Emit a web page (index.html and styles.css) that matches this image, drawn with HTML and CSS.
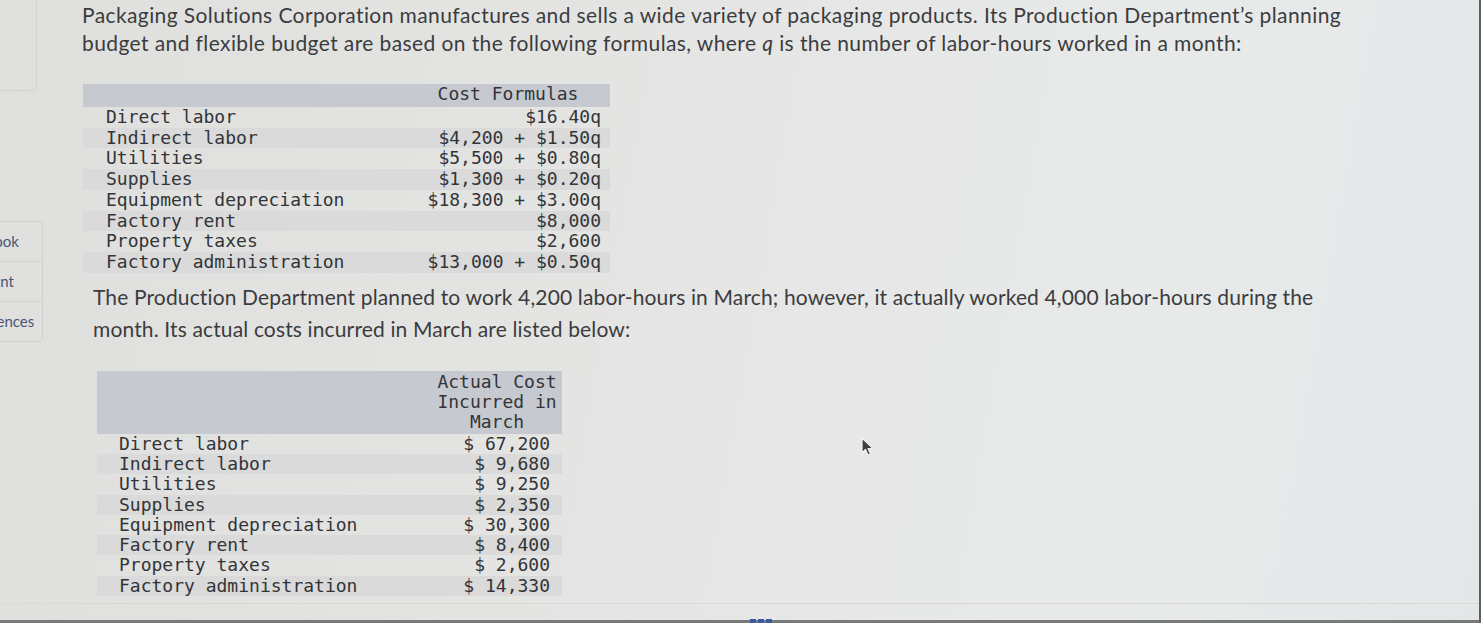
FILE: index.html
```html
<!DOCTYPE html>
<html>
<head>
<meta charset="utf-8">
<link rel="stylesheet" href="styles.css">
</head>
<body>
<div class="screen">
  <aside class="sidebar">
    <div class="side-top"></div>
    <nav class="side-nav">
      <div class="side-item">eBook</div>
      <div class="side-item">Print</div>
      <div class="side-item">References</div>
    </nav>
  </aside>
  <main class="main">
    <p class="prose prose-first">Packaging Solutions Corporation manufactures and sells a wide variety of packaging products. Its Production Department’s planning budget and flexible budget are based on the following formulas, where <i>q</i> is the number of labor-hours worked in a month:</p>
    <table class="cost-table formulas">
      <thead>
        <tr><th class="lab"></th><th class="val">Cost Formulas</th></tr>
      </thead>
      <tbody>
        <tr><td class="lab">Direct labor</td><td class="val">$16.40q</td></tr>
        <tr><td class="lab">Indirect labor</td><td class="val">$4,200 + $1.50q</td></tr>
        <tr><td class="lab">Utilities</td><td class="val">$5,500 + $0.80q</td></tr>
        <tr><td class="lab">Supplies</td><td class="val">$1,300 + $0.20q</td></tr>
        <tr><td class="lab">Equipment depreciation</td><td class="val">$18,300 + $3.00q</td></tr>
        <tr><td class="lab">Factory rent</td><td class="val">$8,000</td></tr>
        <tr><td class="lab">Property taxes</td><td class="val">$2,600</td></tr>
        <tr><td class="lab">Factory administration</td><td class="val">$13,000 + $0.50q</td></tr>
      </tbody>
    </table>
    <p class="prose prose-second">The Production Department planned to work 4,200 labor-hours in March; however, it actually worked 4,000 labor-hours during the month. Its actual costs incurred in March are listed below:</p>
    <table class="cost-table actuals">
      <thead>
        <tr><th class="lab"></th><th class="val">Actual Cost<br>Incurred in<br>March</th></tr>
      </thead>
      <tbody>
        <tr><td class="lab">Direct labor</td><td class="val">$ 67,200</td></tr>
        <tr><td class="lab">Indirect labor</td><td class="val">$ 9,680</td></tr>
        <tr><td class="lab">Utilities</td><td class="val">$ 9,250</td></tr>
        <tr><td class="lab">Supplies</td><td class="val">$ 2,350</td></tr>
        <tr><td class="lab">Equipment depreciation</td><td class="val">$ 30,300</td></tr>
        <tr><td class="lab">Factory rent</td><td class="val">$ 8,400</td></tr>
        <tr><td class="lab">Property taxes</td><td class="val">$ 2,600</td></tr>
        <tr><td class="lab">Factory administration</td><td class="val">$ 14,330</td></tr>
      </tbody>
    </table>
  </main>
  <svg class="cursor" width="16" height="20" viewBox="0 0 16 20">
    <path d="M2 1 L2 16 L5.5 12.5 L8 18 L10.5 17 L8 11.5 L13 11.5 Z" fill="#3d3f42" stroke="#f2f2f2" stroke-width="1.2" stroke-linejoin="round"/>
  </svg>
  <div class="footer-line"></div>
  <div class="bottom-bar"><span class="bar-dots"></span></div>
</div>
</body>
</html>
```
FILE: styles.css
```css
html, body {
  margin: 0;
  padding: 0;
}
body {
  width: 1481px;
  height: 623px;
  overflow: hidden;
  background: #e3e4e2;
}
.screen {
  position: relative;
  width: 1481px;
  height: 623px;
  display: flex;
  overflow: hidden;
  background: linear-gradient(100deg, #dfe0de 0%, #e4e5e3 40%, #e8eaea 75%, #e4e7e8 100%);
  box-sizing: border-box;
  border-right: 2px solid #5c5f63;
}
.sidebar {
  width: 42px;
  flex: none;
  display: flex;
  flex-direction: column;
}
.side-top {
  height: 90px;
  width: 36px;
  border: 1px solid #d2d3d1;
  border-top: none;
  border-left: none;
  border-bottom-right-radius: 5px;
}
.side-nav {
  margin-top: 130px;
  margin-left: -47px;
  width: 88px;
  flex: none;
  border: 1px solid #cfd0ce;
  border-radius: 5px;
}
.side-item {
  height: 39px;
  line-height: 38px;
  font-family: "Lato", "Liberation Sans", sans-serif;
  font-size: 15px;
  color: #4a5576;
  white-space: nowrap;
  text-align: center;
  border-bottom: 1px solid #d3d4d2;
}
.side-item:last-child {
  border-bottom: none;
}
.main {
  flex: 1;
  padding-left: 40px;
}
.prose {
  margin: 0;
  font-family: "Lato", "Liberation Sans", sans-serif;
  font-size: 21px;
  color: #3b3c3e;
}
.prose-first {
  width: 1272px;
  line-height: 28px;
  padding-top: 1px;
  letter-spacing: 0.4px;
}
.prose-second {
  width: 1250px;
  line-height: 32px;
  margin-left: 11px;
  margin-top: 8px;
  letter-spacing: 0.14px;
}
.cost-table {
  border-collapse: collapse;
  font-family: "DejaVu Sans Mono", "Liberation Mono", monospace;
  font-size: 18px;
  color: #333438;
}
.cost-table th,
.cost-table td {
  padding: 0;
  height: 20.7px;
  line-height: 20.7px;
  white-space: nowrap;
  font-weight: normal;
}
.cost-table thead tr {
  background: #c6c9cf;
}
.cost-table tbody tr:nth-child(even) {
  background: #d9dad9;
}
.formulas {
  margin-top: 27px;
  margin-left: 1px;
}
.formulas thead th {
  height: 23px;
  vertical-align: top;
}
.formulas .lab {
  width: 315px;
  padding-left: 23px;
  text-align: left;
}
.formulas .val {
  width: 180px;
  padding-right: 9px;
  text-align: right;
}
.formulas th.val {
  text-align: center;
  text-indent: -6px;
}
.actuals {
  margin-top: 26px;
  margin-left: 15px;
}
.actuals thead th {
  line-height: 20px;
  height: 63px;
  vertical-align: middle;
}
.actuals td {
  height: 20.3px;
  line-height: 20.3px;
}
.actuals .lab {
  width: 313px;
  padding-left: 22px;
  text-align: left;
}
.actuals .val {
  width: 118px;
  padding-right: 12px;
  text-align: right;
}
.actuals th.val {
  text-align: center;
  padding-left: 4px;
  padding-right: 4px;
}
.cursor {
  position: absolute;
  left: 860px;
  top: 437px;
}
.footer-line {
  position: absolute;
  left: 0;
  right: 0;
  top: 603px;
  height: 1px;
  background: #d8d9d7;
}
.bottom-bar {
  position: absolute;
  left: 0;
  right: 0;
  bottom: 0;
  height: 3px;
  background: #77797b;
}
.bar-dots {
  position: absolute;
  left: 750px;
  top: -1px;
  width: 22px;
  height: 4px;
  background: repeating-linear-gradient(90deg, #3d5aa0 0 6px, transparent 6px 8px);
}
```
